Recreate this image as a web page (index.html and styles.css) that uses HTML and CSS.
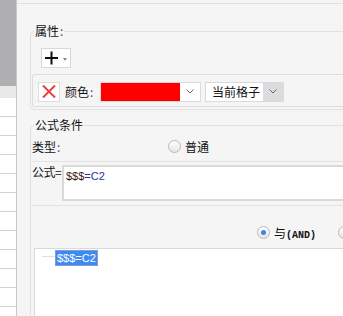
FILE: index.html
```html
<!DOCTYPE html>
<html lang="zh-CN">
<head>
  <meta charset="UTF-8" />
  <title>条件格式 - 公式条件</title>
  <link rel="stylesheet" href="styles.css">
</head>
<body>
  <div class="screen">
    <div class="sheet">
      <div class="sheet-head"></div>
      <div class="sheet-band"></div>
      <div class="sheet-row"></div>
      <div class="sheet-row"></div>
      <div class="sheet-row"></div>
      <div class="sheet-row"></div>
      <div class="sheet-row"></div>
      <div class="sheet-row"></div>
      <div class="sheet-row"></div>
      <div class="sheet-row"></div>
      <div class="sheet-row"></div>
      <div class="sheet-row"></div>
      <div class="sheet-row"></div>
    </div>

    <div class="panel">
      <fieldset class="group group-attr">
        <legend>属性<span class="colon">:</span></legend>
        <button class="add-btn" type="button">
          <svg width="15" height="14" viewBox="0 0 15 14">
            <path d="M1 7H14M7.5 0.5V13.5" stroke="#111" stroke-width="2" fill="none"/>
          </svg>
          <span class="caret"></span>
        </button>
        <div class="rule-row">
          <button class="del-btn" type="button">
            <svg width="14" height="13" viewBox="0 0 14 13">
              <path d="M1 0.5L13 12.5M13 0.5L1 12.5" stroke="#e8413c" stroke-width="2" fill="none"/>
            </svg>
          </button>
          <span class="field-label">颜色<span class="colon">:</span></span>
          <div class="color-select">
            <span class="swatch"></span>
            <span class="arrow">
              <svg width="8" height="5" viewBox="0 0 8 5"><path d="M0.5 0.5L4 4L7.5 0.5" stroke="#666" fill="none"/></svg>
            </span>
          </div>
          <div class="scope-select">
            <span class="scope-value">当前格子</span>
            <span class="arrow arrow-gray">
              <svg width="8" height="5" viewBox="0 0 8 5"><path d="M0.5 0.5L4 4L7.5 0.5" stroke="#666" fill="none"/></svg>
            </span>
          </div>
        </div>
      </fieldset>

      <fieldset class="group group-formula">
        <legend>公式条件</legend>
        <div class="type-row">
          <span class="type-label">类型<span class="colon">:</span></span>
          <span class="radio"></span>
          <span class="radio-label">普通</span>
        </div>
        <div class="formula-row">
          <span class="formula-label">公式=</span>
          <div class="formula-box"><span class="ref-dollar">$$$</span><span class="ref-cell">=C2</span></div>
        </div>
        <div class="logic-row">
          <span class="radio checked"></span>
          <span class="radio-label">与<span class="latin">(AND)</span></span>
          <span class="radio radio-next"></span>
        </div>
        <div class="tree-box">
          <span class="tree-line"></span>
          <span class="tree-node">$$$=C2</span>
        </div>
      </fieldset>
    </div>
  </div>
</body>
</html>
```

FILE: styles.css
```css
body {
  margin: 0;
  background: #f5f5f5;
  font-family: "Noto Sans CJK SC", sans-serif;
  font-size: 12px;
  color: #111;
  overflow: hidden;
}
.screen {
  display: flex;
  width: 343px;
  height: 316px;
  overflow: hidden;
}

/* sheet strip on the left */
.sheet {
  width: 16px;
  flex: none;
  display: flex;
  flex-direction: column;
  background: #fff;
  border-right: 1px solid #c9c9c9;
}
.sheet-head {
  height: 86px;
  flex: none;
  background: #afaeb0;
}
.sheet-band {
  height: 12px;
  flex: none;
  background: #e8e8e8;
}
.sheet-row {
  height: 18px;
  flex: none;
  border-bottom: 1px solid #d2d2d2;
}

/* dialog panel */
.panel {
  flex: 1;
  min-width: 0;
  margin-top: 3px;
  border-top: 1px solid #e0e0e0;
  overflow: hidden;
}
.group {
  margin: 0 -40px 0 13px;
  padding: 0 0 2px 1px;
  border: 1px solid #e1e1e1;
  border-radius: 4px;
  min-width: 0;
}
.group legend {
  margin-left: 2px;
  padding: 0 1px;
  line-height: 16px;
}
.group-attr {
  margin-top: 19px;
}
.group-formula {
  margin-top: 7px;
  height: 300px;
}
.colon {
  color: #6b3f73;
  margin-left: 1px;
}

.add-btn {
  display: flex;
  align-items: center;
  width: 30px;
  height: 20px;
  margin: 9px 0 0 9px;
  padding: 0 0 0 2px;
  box-sizing: border-box;
  border: 1px solid #d6d6d6;
  background: #fff;
}
.caret {
  margin-left: 4px;
  margin-top: 2px;
  border-left: 2px solid transparent;
  border-right: 2px solid transparent;
  border-top: 3px solid #888;
}

.rule-row {
  display: flex;
  align-items: center;
  height: 29px;
  margin-top: 6px;
  padding: 2px 0 0 5px;
  border: 1px solid #dcdcdc;
  border-radius: 2px;
}
.del-btn {
  display: flex;
  align-items: center;
  justify-content: center;
  width: 22px;
  height: 20px;
  padding: 0;
  box-sizing: border-box;
  border: 1px solid #dedede;
  background: #fff;
}
.field-label {
  width: 35px;
  margin-left: 5px;
}
.color-select,
.scope-select {
  display: flex;
  height: 20px;
  box-sizing: border-box;
  border: 1px solid #dadada;
  background: #fff;
}
.color-select {
  width: 101px;
}
.swatch {
  flex: 1;
  background: #ff0000;
}
.arrow {
  display: flex;
  align-items: center;
  justify-content: center;
  width: 20px;
  background: #fff;
}
.arrow-gray {
  background: #dcdbde;
}
.scope-select {
  width: 79px;
  margin-left: 4px;
}
.scope-value {
  flex: 1;
  padding-left: 6px;
  line-height: 18px;
}

/* formula condition */
.type-row {
  display: flex;
  align-items: center;
  height: 26px;
  padding-bottom: 2px;
  border-bottom: 1px solid #e3e3e3;
}
.type-label {
  width: 136px;
}
.radio {
  width: 13px;
  height: 13px;
  flex: none;
  box-sizing: border-box;
  border: 1px solid #b9b9b9;
  border-radius: 50%;
  background: linear-gradient(#ffffff, #e4e4e4);
  position: relative;
}
.radio.checked::after {
  content: "";
  position: absolute;
  left: 3px;
  top: 3px;
  width: 5px;
  height: 5px;
  border-radius: 50%;
  background: #3a84f0;
}
.radio-label {
  margin-left: 4px;
}
.latin {
  font-family: "Liberation Mono", monospace;
  font-size: 10px;
  font-weight: bold;
}

.formula-row {
  display: flex;
  align-items: flex-start;
  padding: 3px 0 4px;
  border-bottom: 1px solid #e3e3e3;
}
.formula-label {
  width: 30px;
  flex: none;
  white-space: nowrap;
  letter-spacing: -0.5px;
  line-height: 13px;
}
.formula-box {
  flex: 1;
  height: 36px;
  box-sizing: border-box;
  padding: 2px;
  border: 2px solid #dadada;
  background: #fff;
  font-family: "Liberation Sans", sans-serif;
  font-size: 11px;
  line-height: 15px;
}
.ref-dollar {
  color: #3a1414;
}
.ref-cell {
  color: #27339a;
}

.logic-row {
  display: flex;
  align-items: center;
  height: 13px;
  padding: 20px 0 0 225px;
}
.radio-next {
  margin-left: 22px;
}

.tree-box {
  display: flex;
  align-items: flex-start;
  height: 100px;
  margin: 9px 0 0 2px;
  padding: 1px 0 0 7px;
  border: 1px solid #d9d9d9;
  background: #fff;
}
.tree-line {
  width: 13px;
  height: 1px;
  margin-top: 6px;
  background: #e6dede;
}
.tree-node {
  height: 16px;
  box-sizing: border-box;
  padding: 0 1px;
  border: 1px solid #8c96d6;
  background: #3c8cf0;
  color: #fff;
  font-family: "Liberation Sans", sans-serif;
  font-size: 11px;
  line-height: 14px;
}
```
